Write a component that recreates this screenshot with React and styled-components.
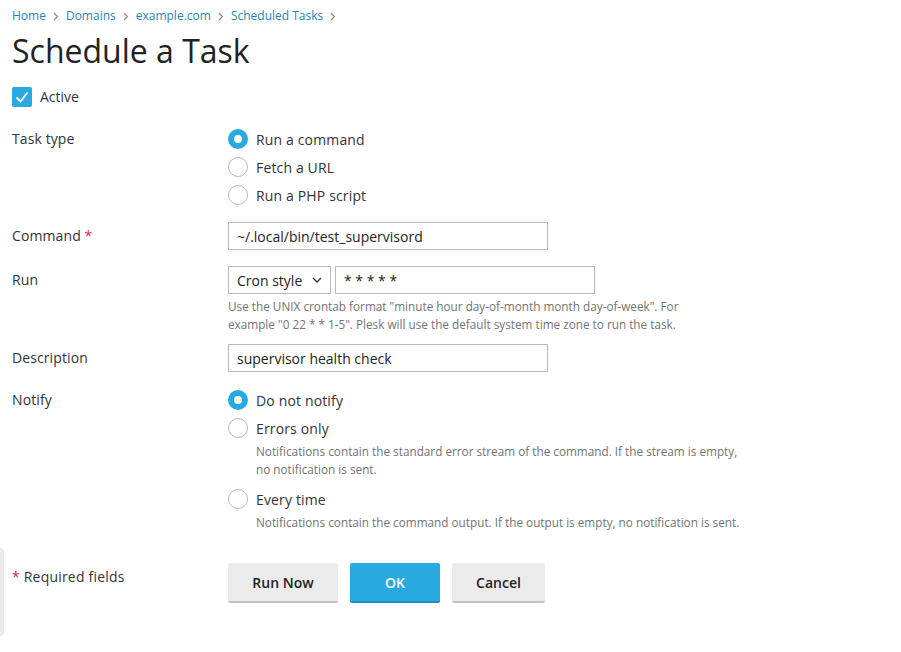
import React from 'react';
import styled, { createGlobalStyle } from 'styled-components';

const Global = createGlobalStyle`
  body {
    margin: 0;
    background: #fff;
    font-family: "Open Sans", "Liberation Sans", sans-serif;
    color: #333;
  }
`;

const Page = styled.div`
  padding: 7px 0 0;
  width: 901px;
`;

const Crumbs = styled.nav`
  display: flex;
  align-items: center;
  padding-left: 12px;
  font-size: 12px;
  line-height: 18px;
`;

const Crumb = styled.a`
  color: #1f85b9;
  text-decoration: none;
`;

const Sep = styled.span`
  display: inline-flex;
  width: 20px;
  justify-content: center;
  color: #888;
`;

const Title = styled.h1`
  margin: 6px 0 0 12px;
  font-size: 32px;
  line-height: 40px;
  font-weight: 400;
  color: #222;
`;

const CheckRow = styled.label`
  display: flex;
  align-items: center;
  gap: 8px;
  margin: 16px 0 0 12px;
  font-size: 14px;
  line-height: 20px;
  color: #333;
`;

const CheckBox = styled.span`
  width: 20px;
  height: 20px;
  border-radius: 2px;
  background: #28aae0;
  display: inline-flex;
  align-items: center;
  justify-content: center;
`;

const Row = styled.div`
  display: grid;
  grid-template-columns: 216px 1fr;
  padding-left: 12px;
  margin-top: ${p => p.$mt}px;
`;

const Label = styled.div`
  font-size: 14px;
  line-height: 28px;
  color: #333;
  letter-spacing: 0.1px;
`;

const Req = styled.span`
  color: #d02d4b;
`;

const Field = styled.div`
  display: flex;
  flex-direction: column;
`;

const RadioItem = styled.label`
  display: flex;
  align-items: center;
  gap: 8px;
  height: 28px;
  font-size: 14px;
  color: #333;
  letter-spacing: 0.15px;
`;

const RadioDot = styled.span`
  box-sizing: border-box;
  width: 20px;
  height: 20px;
  border-radius: 50%;
  border: ${p => (p.$on ? '6px solid #28aae0' : '1px solid #b8b8b8')};
  background: #fff;
`;

const Input = styled.input`
  box-sizing: border-box;
  width: ${p => p.$w}px;
  height: 28px;
  border: 1px solid #b9b9b9;
  border-radius: 0;
  padding: 0 8px;
  font: inherit;
  font-size: 14px;
  color: #222;
  outline: none;
`;

const Controls = styled.div`
  display: flex;
  gap: 4px;
`;

const Select = styled.select`
  box-sizing: border-box;
  width: 103px;
  height: 28px;
  border: 1px solid #b9b9b9;
  border-radius: 0;
  padding: 0 8px;
  font: inherit;
  font-size: 14px;
  color: #222;
  background: #fff url("data:image/svg+xml,%3Csvg xmlns='http://www.w3.org/2000/svg' width='10' height='6' viewBox='0 0 10 6'%3E%3Cpath d='M1 1l4 4 4-4' fill='none' stroke='%23333' stroke-width='1.3'/%3E%3C/svg%3E") no-repeat right 8px center;
  appearance: none;
`;

const Hint = styled.div`
  font-size: 11.75px;
  line-height: 18px;
  color: #737373;
  max-width: ${p => p.$w || 500}px;
  margin: ${p => p.$m || '0'};
`;

const Footer = styled.div`
  display: flex;
  height: 88px;
  margin-top: 17px;
`;

const Edge = styled.div`
  width: 4px;
  background: #ebebeb;
  border-radius: 0 4px 4px 0;
`;

const FooterBody = styled.div`
  display: grid;
  grid-template-columns: 216px 1fr;
  padding: 15px 0 0 8px;
`;

const FooterNote = styled.div`
  font-size: 14px;
  line-height: 20px;
  padding-top: 4px;
  color: #333;
  letter-spacing: 0.2px;
`;

const Buttons = styled.div`
  display: flex;
  gap: 12px;
  align-items: flex-start;
`;

const Button = styled.button`
  box-sizing: border-box;
  height: 40px;
  min-width: ${p => p.$w}px;
  border: none;
  border-bottom: 2px solid ${p => (p.$primary ? '#1c8ec0' : '#c1c1c1')};
  border-radius: 2px;
  background: ${p => (p.$primary ? '#28aae0' : '#ebebeb')};
  color: ${p => (p.$primary ? '#fff' : '#222')};
  font: inherit;
  font-size: 14px;
  font-weight: 600;
  padding: 0 16px;
`;

const Chevron = () => (
  <svg width="6" height="9" viewBox="0 0 6 9">
    <path d="M1 1l3.5 3.5L1 8" fill="none" stroke="#888" strokeWidth="1.1" />
  </svg>
);

const Check = () => (
  <svg width="14" height="12" viewBox="0 0 14 12">
    <path d="M1.5 6.5l4 4L12.5 1.5" fill="none" stroke="#fff" strokeWidth="2" />
  </svg>
);

const Radio = ({ on, children }) => (
  <RadioItem>
    <RadioDot $on={on} />
    {children}
  </RadioItem>
);

const crumbs = ['Home', 'Domains', 'example.com', 'Scheduled Tasks'];

const App = () => (
  <Page>
    <Global />
    <Crumbs>
      {crumbs.map(c => (
        <React.Fragment key={c}>
          <Crumb href="#">{c}</Crumb>
          <Sep><Chevron /></Sep>
        </React.Fragment>
      ))}
    </Crumbs>
    <Title>Schedule a Task</Title>
    <CheckRow>
      <CheckBox><Check /></CheckBox>
      Active
    </CheckRow>

    <Row $mt={18}>
      <Label>Task type</Label>
      <Field>
        <Radio on>Run a command</Radio>
        <Radio>Fetch a URL</Radio>
        <Radio>Run a PHP script</Radio>
      </Field>
    </Row>

    <Row $mt={13}>
      <Label>Command <Req>*</Req></Label>
      <Field>
        <Input $w={320} defaultValue="~/.local/bin/test_supervisord" />
      </Field>
    </Row>

    <Row $mt={16}>
      <Label>Run</Label>
      <Field>
        <Controls>
          <Select defaultValue="cron">
            <option value="cron">Cron style</option>
          </Select>
          <Input $w={260} defaultValue="* * * * *" />
        </Controls>
        <Hint $m="3px 0 0">
          Use the UNIX crontab format "minute hour day-of-month month day-of-week". For
          example "0 22 * * 1-5". Plesk will use the default system time zone to run the task.
        </Hint>
      </Field>
    </Row>

    <Row $mt={11}>
      <Label>Description</Label>
      <Field>
        <Input $w={320} defaultValue="supervisor health check" />
      </Field>
    </Row>

    <Row $mt={14}>
      <Label>Notify</Label>
      <Field>
        <Radio on>Do not notify</Radio>
        <Radio>Errors only</Radio>
        <Hint $m="0 0 7px 28px" $w={492}>
          Notifications contain the standard error stream of the command. If the stream is empty,
          no notification is sent.
        </Hint>
        <Radio>Every time</Radio>
        <Hint $m="0 0 0 28px" $w={520}>
          Notifications contain the command output. If the output is empty, no notification is sent.
        </Hint>
      </Field>
    </Row>

    <Footer>
      <Edge />
      <FooterBody>
        <FooterNote><Req>*</Req> Required fields</FooterNote>
        <Buttons>
          <Button $w={110}>Run Now</Button>
          <Button $w={90} $primary>OK</Button>
          <Button $w={93}>Cancel</Button>
        </Buttons>
      </FooterBody>
    </Footer>
  </Page>
);

export default App;
